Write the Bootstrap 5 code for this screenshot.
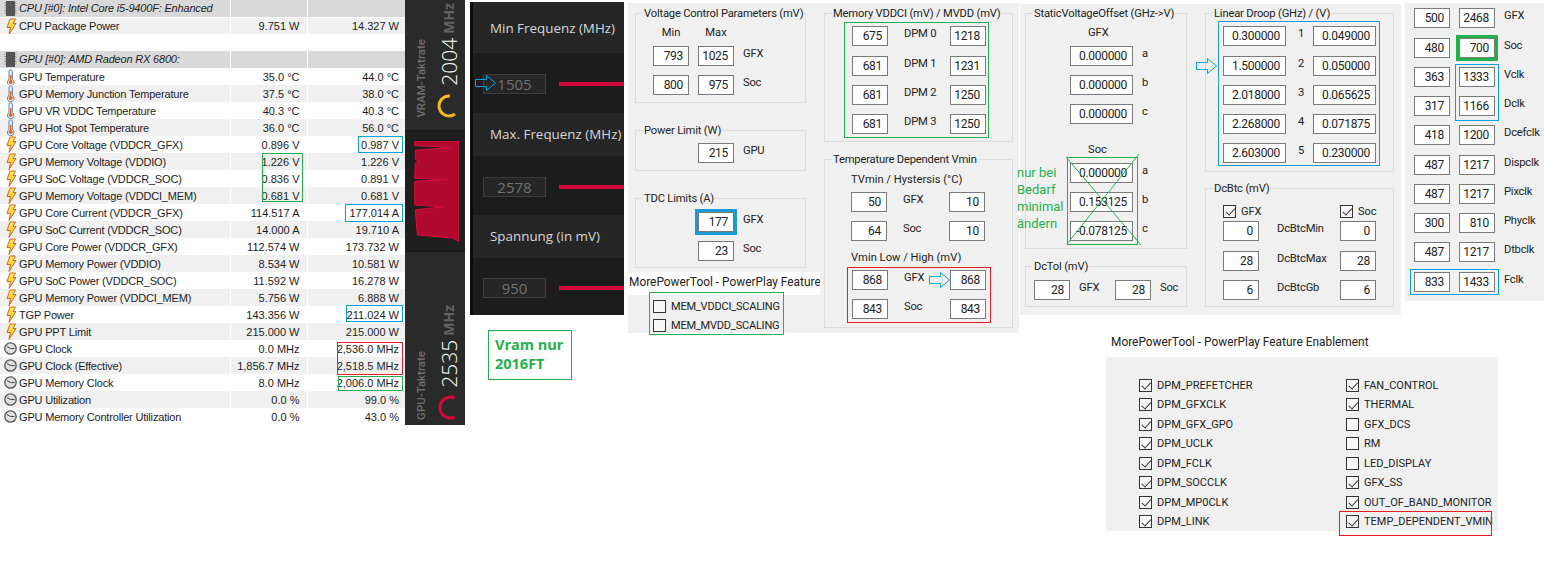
<!DOCTYPE html>
<html lang="de">
<head>
<meta charset="utf-8">
<title>GPU Tuning</title>
<link href="https://cdn.jsdelivr.net/npm/bootstrap@5.3.0/dist/css/bootstrap.min.css" rel="stylesheet">
<style>
html,body{margin:0;background:#fff}
.stage{position:relative;width:1546px;height:561px;overflow:hidden;background:#fff;font-family:Roboto,"Liberation Sans",sans-serif;font-size:11.2px;line-height:15px;color:#222}
.win{position:absolute}
/* sensor table */
.w-table{left:0;top:0;width:405px}
.hw{border-collapse:collapse;table-layout:fixed;width:405px;font-family:"Liberation Sans",sans-serif;font-size:11px;color:#1c1c1c}
.hw td{height:17px;padding:0;line-height:16px;white-space:nowrap;overflow:hidden}
.hw td:first-child{width:230px;padding-left:19px;position:relative;border-right:1px solid #fff;letter-spacing:-.18px}
.hw td:nth-child(2){width:77px;text-align:right;padding-right:7px;border-right:1px solid #fff}
.hw td:nth-child(3){width:98px;text-align:right;padding-right:6px}
.hw tr.alt td{background:#f0f0f0}
.hw tr.sec td{background:#d9d9d9;font-style:italic;border-bottom:1px solid #fff}
.ic{position:absolute;left:4px;top:0;width:13px;height:17px}
.mk{position:absolute;border:1px solid;pointer-events:none}
.c-b{border-color:#00a2e8}.c-g{border-color:#22b14c}.c-r{border-color:#ed1c24}
.m1{left:358px;top:136px;width:45px;height:17px}
.m2{left:262px;top:153px;width:41px;height:49px}
.m3{left:345px;top:204px;width:58px;height:18px}
.m4{left:346px;top:305px;width:57px;height:17px}
.m5{left:337px;top:342px;width:66px;height:33px}
.m6{left:338px;top:376px;width:65px;height:15px}
/* radeon strip */
.w-strip{left:405px;top:0;width:60px;height:425px;background:#2a2a2a;display:flex;flex-direction:column;font-family:"Open Sans","Noto Sans",sans-serif}
.sx{display:flex;gap:6px;padding-left:10px}
.sx1{height:130px;padding-top:5px;padding-bottom:12px;align-items:flex-end}
.sx3{flex:1;padding-bottom:5px;align-items:flex-end}
.sx2{height:122px;background:#1f1f1f;border-top:1px solid #181818;border-bottom:1px solid #181818;padding:10px 0 0 9px}
.rot{writing-mode:vertical-rl;transform:rotate(180deg);white-space:nowrap}
.lbv{font-family:Roboto,sans-serif;font-size:11.5px;font-weight:500;color:#6e6e6e;line-height:13px;width:13px}
.bigc{display:flex;flex-direction:column;align-items:flex-start;gap:7px}
.big{font-size:21px;font-weight:300;color:#fff;line-height:24px;width:24px;margin-left:3px}
.big b{font-size:14px;font-weight:700;color:#626262;margin-inline-start:4px}
/* dark settings */
.w-dark{left:470px;top:2px;width:154px;height:313px;background:#1c1c1c;border-left:3px solid #0c0c0c;display:flex;flex-direction:column;font-family:"Open Sans","Noto Sans",sans-serif}
.dh{background:#262626;color:#d8d8d8;font-size:13.4px;padding-left:17px;display:flex;align-items:center;white-space:nowrap;overflow:hidden;margin-bottom:2px}
.dh1{height:51px;padding-top:2px}.dh2{height:43px}
.dr{display:flex;align-items:center;padding-left:10px;gap:13px}
.dr1{height:58px}.dr2{height:57px}.dr3{flex:1}
.dv{width:63px;height:20px;border:1px solid #3d3d3d;background:#262626;color:#727272;font-size:15px;line-height:18px;text-align:center}
.dbar{flex:1;height:4px;background:#d4063c}
.w-note{left:488px;top:330px;width:84px;height:50px;border:1px solid #22b14c;color:#22b14c;font:700 14.5px/19px "Open Sans","Noto Sans",sans-serif;padding:4px 0 0 6px}
/* dialog panels */
.pnl{background:#f0f0f0}
.w-a{left:628px;top:3px;width:391px;height:330px;display:flex}
.w-b{left:1020px;top:4px;width:381px;height:311px;display:flex}
.w-c{left:1405px;top:3px;width:139px;height:298px;padding:5px 0 0 9px}
.gb{border:1px solid #dcdcdc}
.gt{display:table;margin:-8px 0 0 7px;padding:0 1px;background:#f0f0f0;height:15px;white-space:nowrap;letter-spacing:-.18px}
.tb{display:block;height:20px;background:#fff;border:1px solid #7a7a7a;text-align:right;padding-right:5px;line-height:19px;color:#222;font-size:12px;letter-spacing:-.3px}
.lb{align-self:start;white-space:nowrap;letter-spacing:-.2px}
.thick-b{outline:3px solid #1b9ad6;outline-offset:0}
.thick-g{outline:3px solid #22b14c;outline-offset:0}
.ca{width:192px;flex:none;padding-top:10px}
.cb2{width:199px;flex:none;padding:10px 0 0 4px}
.ca .gb{margin-left:7px;width:171px}
.g1{height:90px}.g2{height:41px;margin-top:27px}.g3{height:70px;margin-top:27px}
.gr3{display:grid;grid-template-columns:36px 36px auto;column-gap:9px;padding-left:17px}
.gr3.r1{margin-top:4px;row-gap:9px}
.gr3.r1 .hh{margin-bottom:-3px;text-align:center}
.gr3.r2{margin-top:5px}
.gr3.r3{margin-top:6px;row-gap:9px}
.strip-w{margin-top:4px;height:23px;background:#fff;padding:3px 0 0 1px;font-size:11.9px;white-space:nowrap;overflow:hidden;color:#222}
.chkbox{position:relative;z-index:1;margin:-3px 0 0 21px;width:135px;height:43px;border:1px solid #22b14c;padding:4px 0 0 3px}
.ck{display:flex;align-items:center;gap:5px;height:19px;white-space:nowrap;font-size:11px}
.chkbox .ck{letter-spacing:-.2px}
.cbx{appearance:none;-webkit-appearance:none;flex:none;position:relative;width:13px;height:13px;margin:0;border:1px solid #333;background:#f7f7f7;border-radius:0}
.cbx:checked::after{content:"";position:absolute;left:3.5px;top:.5px;width:4.5px;height:8.5px;border-right:1px solid #333;border-bottom:1px solid #333;transform:rotate(42deg)}
.gm{height:129px;width:189px}
.gtemp{height:169px;width:189px;margin-top:17px}
.box-g{margin:0 0 0 19px;width:145px;height:116px;border:1px solid #22b14c;padding:3px 0 0 7px;margin-top:1px}
.gd{display:grid;grid-template-columns:36px 62px 36px}
.r4{grid-template-rows:30px 29px 29px 20px}
.gd .lb{padding-left:16px}
.sub{margin:5px 0 0 26px;height:15px;white-space:nowrap}
.gd.t1{margin:5px 0 0 26px;grid-template-rows:29px 20px}
.sub.s2{margin-top:9px}
.box-r{margin:2px 0 0 22px;width:144px;height:56px;border:1px solid #ed1c24;padding:2px 0 0 4px}
.box-r .gd{grid-template-rows:29px 20px}
.fc{flex:none}
.f1{width:167px;padding:9px 0 0 5px}
.f2{width:214px;padding:9px 0 0 18px}
.gs{width:162px;height:236px}
.gdct{width:162px;height:41px;margin-top:17px}
.gl{width:189px;height:159px}
.gdb{width:189px;height:119px;margin-top:16px}
.gr-s{display:grid;grid-template-columns:63px auto;column-gap:9px;padding-left:44px;row-gap:9px}
.gr-s .hh{padding-left:18px;margin-bottom:-3px}
.gs .t-g{margin-top:4px}
.gs .t-s{margin-top:18px}
.gr-t{display:grid;grid-template-columns:36px 27px 36px auto;column-gap:9px;margin:6px 0 0 8px}
.box-b{margin-left:12px;width:162px;height:145px;border:1px solid #1b9ad6;padding:4px 0 0 4px}
.gr-l{display:grid;grid-template-columns:63px 27px 63px;grid-template-rows:30px 29px 29px 29px 20px}
.gr-l .lb{padding-left:12px}
.gr-d{display:grid;grid-template-columns:36px 81px 36px;grid-template-rows:25px 30px 29px 20px;padding-left:17px}
.gr-d .ck{height:14px;align-self:start;margin-top:8px}
.gr-d .lb{padding-left:18px}
.gr-c{display:grid;grid-template-columns:36px 36px auto;column-gap:9px;grid-template-rows:30px 29px 29px 29px 30px 29px 29px 29px 30px 20px}
.mb1{left:50px;top:61px;width:44px;height:57px}
.mb2{left:5px;top:266px;width:89px;height:26px}
.w-a .ar,.w-b .ar,.w-dark .ar{position:absolute}
.ar{stroke:#00a2e8;fill:none;overflow:visible;width:21px;height:16px}
.a1{left:2px;top:73px}
.a2{left:301px;top:269px}
.a3{left:176px;top:54px}
.xm{position:absolute;left:47px;top:153px;width:71px;height:88px;overflow:visible}
.grn{position:absolute;left:-3px;top:160px;color:#22b14c;font-size:13px;line-height:17px;white-space:nowrap}
.w-f{left:1106px;top:333px;width:392px}
.ft{height:24px;padding:1px 0 0 5px;font-size:11.9px;line-height:16px;white-space:nowrap;color:#222}
.fp{height:174px;padding:18.5px 0 0 33px;display:grid;grid-template-columns:207px auto;grid-auto-rows:19.5px}
.fp .ck{height:19.5px}
.fr{left:233px;top:178px;width:153px;height:25px}
</style>
</head>
<body>
<svg width="0" height="0" class="d-block" aria-hidden="true">
<defs>
<linearGradient id="bolt" x1="0" y1="0" x2="0" y2="1"><stop offset="0" stop-color="#ffe96b"/><stop offset="1" stop-color="#f6c21a"/></linearGradient>
<symbol id="i-bolt" viewBox="0 0 13 17"><path d="M6 1 L11.5 1 L9 5.5 L12 5.5 L5 16.5 L6.5 9.5 L3 9.5 Z" fill="url(#bolt)" stroke="#d9661c" stroke-width="1"/></symbol>
<symbol id="i-th" viewBox="0 0 13 17"><path d="M5 2.5 a1.7 1.7 0 0 1 3.4 0 V10.5 a3.3 3.3 0 1 1 -3.4 0 Z" fill="#e8eef6" stroke="#5b7fae" stroke-width="1"/><path d="M6.7 6 V12" stroke="#e2661a" stroke-width="1.4"/><circle cx="6.7" cy="13" r="2" fill="#e2661a"/></symbol>
<symbol id="i-cl" viewBox="0 0 13 17"><circle cx="6.5" cy="8.5" r="5.7" fill="#dfdfdf" stroke="#555" stroke-width="1.3"/><path d="M6.5 8.5 L3 6.5 M6.5 8.5 H10.5" stroke="#444" stroke-width="1"/></symbol>
<symbol id="i-ch" viewBox="0 0 13 17"><rect x="2" y="1" width="9" height="15" fill="#555"/><path d="M0.5 3H2M0.5 5.5H2M0.5 8H2M0.5 10.5H2M0.5 13H2M11 3H12.5M11 5.5H12.5M11 8H12.5M11 10.5H12.5M11 13H12.5" stroke="#888"/></symbol>
</defs>
</svg>
<div class="stage">

<div class="win w-table">
<table class="hw"><tbody>
<tr class="sec"><td><svg class="ic"><use href="#i-ch"/></svg>CPU [#0]: Intel Core i5-9400F: Enhanced</td><td></td><td></td></tr>
<tr class="alt"><td><svg class="ic"><use href="#i-bolt"/></svg>CPU Package Power</td><td>9.751 W</td><td>14.327 W</td></tr>
<tr><td></td><td></td><td></td></tr>
<tr class="sec"><td><svg class="ic"><use href="#i-ch"/></svg>GPU [#0]: AMD Radeon RX 6800:</td><td></td><td></td></tr>
<tr><td><svg class="ic"><use href="#i-th"/></svg>GPU Temperature</td><td>35.0 °C</td><td>44.0 °C</td></tr>
<tr class="alt"><td><svg class="ic"><use href="#i-th"/></svg>GPU Memory Junction Temperature</td><td>37.5 °C</td><td>38.0 °C</td></tr>
<tr><td><svg class="ic"><use href="#i-th"/></svg>GPU VR VDDC Temperature</td><td>40.3 °C</td><td>40.3 °C</td></tr>
<tr class="alt"><td><svg class="ic"><use href="#i-th"/></svg>GPU Hot Spot Temperature</td><td>36.0 °C</td><td>56.0 °C</td></tr>
<tr><td><svg class="ic"><use href="#i-bolt"/></svg>GPU Core Voltage (VDDCR_GFX)</td><td>0.896 V</td><td>0.987 V</td></tr>
<tr class="alt"><td><svg class="ic"><use href="#i-bolt"/></svg>GPU Memory Voltage (VDDIO)</td><td>1.226 V</td><td>1.226 V</td></tr>
<tr><td><svg class="ic"><use href="#i-bolt"/></svg>GPU SoC Voltage (VDDCR_SOC)</td><td>0.836 V</td><td>0.891 V</td></tr>
<tr class="alt"><td><svg class="ic"><use href="#i-bolt"/></svg>GPU Memory Voltage (VDDCI_MEM)</td><td>0.681 V</td><td>0.681 V</td></tr>
<tr><td><svg class="ic"><use href="#i-bolt"/></svg>GPU Core Current (VDDCR_GFX)</td><td>114.517 A</td><td>177.014 A</td></tr>
<tr class="alt"><td><svg class="ic"><use href="#i-bolt"/></svg>GPU SoC Current (VDDCR_SOC)</td><td>14.000 A</td><td>19.710 A</td></tr>
<tr><td><svg class="ic"><use href="#i-bolt"/></svg>GPU Core Power (VDDCR_GFX)</td><td>112.574 W</td><td>173.732 W</td></tr>
<tr class="alt"><td><svg class="ic"><use href="#i-bolt"/></svg>GPU Memory Power (VDDIO)</td><td>8.534 W</td><td>10.581 W</td></tr>
<tr><td><svg class="ic"><use href="#i-bolt"/></svg>GPU SoC Power (VDDCR_SOC)</td><td>11.592 W</td><td>16.278 W</td></tr>
<tr class="alt"><td><svg class="ic"><use href="#i-bolt"/></svg>GPU Memory Power (VDDCI_MEM)</td><td>5.756 W</td><td>6.888 W</td></tr>
<tr><td><svg class="ic"><use href="#i-bolt"/></svg>TGP Power</td><td>143.356 W</td><td>211.024 W</td></tr>
<tr class="alt"><td><svg class="ic"><use href="#i-bolt"/></svg>GPU PPT Limit</td><td>215.000 W</td><td>215.000 W</td></tr>
<tr><td><svg class="ic"><use href="#i-cl"/></svg>GPU Clock</td><td>0.0 MHz</td><td>2,536.0 MHz</td></tr>
<tr class="alt"><td><svg class="ic"><use href="#i-cl"/></svg>GPU Clock (Effective)</td><td>1,856.7 MHz</td><td>2,518.5 MHz</td></tr>
<tr><td><svg class="ic"><use href="#i-cl"/></svg>GPU Memory Clock</td><td>8.0 MHz</td><td>2,006.0 MHz</td></tr>
<tr class="alt"><td><svg class="ic"><use href="#i-cl"/></svg>GPU Utilization</td><td>0.0 %</td><td>99.0 %</td></tr>
<tr><td><svg class="ic"><use href="#i-cl"/></svg>GPU Memory Controller Utilization</td><td>0.0 %</td><td>43.0 %</td></tr>
</tbody></table>
<div class="mk c-b m1"></div><div class="mk c-g m2"></div><div class="mk c-b m3"></div>
<div class="mk c-b m4"></div><div class="mk c-r m5"></div><div class="mk c-g m6"></div>
</div>

<div class="win w-strip">
<div class="sx sx1">
<div class="rot lbv">VRAM-Taktrate</div>
<div class="bigc">
<div class="rot big">2004<b>MHz</b></div>
<svg width="23" height="25" viewBox="0 0 23 25"><path d="M16 3 A10 10 0 1 0 21 21" fill="none" stroke="#f5b81f" stroke-width="3"/></svg>
</div>
</div>
<div class="sx2">
<svg width="45" height="101" viewBox="20 35 135 301"><path d="M22 36 H155 V335 L135 325 L30 316 L24 240 L108 232 L22 226 L22 155 L120 150 L22 146 L24 100 L36 95 L24 90 L24 62 L130 53 L22 48 Z" fill="#b00a2e" stroke="#e0093f" stroke-width="3"/></svg>
</div>
<div class="sx sx3">
<div class="rot lbv">GPU-Taktrate</div>
<div class="bigc">
<div class="rot big">2535<b>MHz</b></div>
<svg width="23" height="25" viewBox="0 0 23 25"><path d="M21 3 A10.5 10.5 0 1 0 21 22" fill="none" stroke="#d4063c" stroke-width="3"/></svg>
</div>
</div>
</div>

<div class="win w-dark">
<div class="dh dh1">Min Frequenz (MHz)</div>
<div class="dr dr1"><div class="dv">1505</div><div class="dbar"></div></div>
<div class="dh dh2">Max. Frequenz (MHz)</div>
<div class="dr dr2"><div class="dv">2578</div><div class="dbar"></div></div>
<div class="dh dh2">Spannung (in mV)</div>
<div class="dr dr3"><div class="dv">950</div><div class="dbar"></div></div>
<svg class="ar a1" viewBox="0 0 21 16"><path d="M.5 4.5H11.5V.5L20.5 8 11.5 15.5V11.5H.5Z"/></svg>
</div>

<div class="win w-note">Vram nur<br>2016FT</div>

<div class="win w-a pnl">
<div class="ca">
<div class="gb g1"><span class="gt">Voltage Control Parameters (mV)</span>
<div class="gr3 r1">
<div class="hh">Min</div><div class="hh">Max</div><div></div>
<span class="tb">793</span><span class="tb">1025</span><span class="lb">GFX</span>
<span class="tb">800</span><span class="tb">975</span><span class="lb">Soc</span>
</div></div>
<div class="gb g2"><span class="gt">Power Limit (W)</span>
<div class="gr3 r2"><div></div><span class="tb">215</span><span class="lb">GPU</span></div></div>
<div class="gb g3"><span class="gt">TDC Limits (A)</span>
<div class="gr3 r3"><div></div><span class="tb thick-b">177</span><span class="lb">GFX</span><div></div><span class="tb">23</span><span class="lb">Soc</span></div></div>
<div class="strip-w">MorePowerTool - PowerPlay Feature</div>
<div class="chkbox">
<label class="ck"><input type="checkbox" class="cbx">MEM_VDDCI_SCALING</label>
<label class="ck"><input type="checkbox" class="cbx">MEM_MVDD_SCALING</label>
</div>
</div>
<div class="cb2">
<div class="gb gm"><span class="gt">Memory VDDCI (mV) / MVDD (mV)</span>
<div class="box-g"><div class="gd r4">
<span class="tb">675</span><span class="lb">DPM 0</span><span class="tb">1218</span>
<span class="tb">681</span><span class="lb">DPM 1</span><span class="tb">1231</span>
<span class="tb">681</span><span class="lb">DPM 2</span><span class="tb">1250</span>
<span class="tb">681</span><span class="lb">DPM 3</span><span class="tb">1250</span>
</div></div></div>
<div class="gb gtemp"><span class="gt">Temperature Dependent Vmin</span>
<div class="sub">TVmin / Hystersis (°C)</div>
<div class="gd t1">
<span class="tb">50</span><span class="lb">GFX</span><span class="tb">10</span>
<span class="tb">64</span><span class="lb">Soc</span><span class="tb">10</span>
</div>
<div class="sub s2">Vmin Low / High (mV)</div>
<div class="box-r"><div class="gd">
<span class="tb">868</span><span class="lb">GFX</span><span class="tb">868</span>
<span class="tb">843</span><span class="lb">Soc</span><span class="tb">843</span>
</div></div>
</div>
</div>
<svg class="ar a2" viewBox="0 0 21 16"><path d="M.5 4.5H11.5V.5L20.5 8 11.5 15.5V11.5H.5Z"/></svg>
</div>

<div class="win w-b pnl">
<div class="fc f1">
<div class="gb gs"><span class="gt">StaticVoltageOffset (GHz-&gt;V)</span>
<div class="gr-s t-g">
<div class="hh">GFX</div><div></div>
<span class="tb">0.000000</span><span class="lb">a</span>
<span class="tb">0.000000</span><span class="lb">b</span>
<span class="tb">0.000000</span><span class="lb">c</span>
</div>
<div class="gr-s t-s">
<div class="hh">Soc</div><div></div>
<span class="tb">0.000000</span><span class="lb">a</span>
<span class="tb">0.153125</span><span class="lb">b</span>
<span class="tb">-0.078125</span><span class="lb">c</span>
</div>
</div>
<div class="gb gdct"><span class="gt">DcTol (mV)</span>
<div class="gr-t"><span class="tb">28</span><span class="lb">GFX</span><span class="tb">28</span><span class="lb">Soc</span></div></div>
</div>
<div class="fc f2">
<div class="gb gl"><span class="gt">Linear Droop (GHz) / (V)</span>
<div class="box-b"><div class="gr-l">
<span class="tb">0.300000</span><span class="lb">1</span><span class="tb">0.049000</span>
<span class="tb">1.500000</span><span class="lb">2</span><span class="tb">0.050000</span>
<span class="tb">2.018000</span><span class="lb">3</span><span class="tb">0.065625</span>
<span class="tb">2.268000</span><span class="lb">4</span><span class="tb">0.071875</span>
<span class="tb">2.603000</span><span class="lb">5</span><span class="tb">0.230000</span>
</div></div></div>
<div class="gb gdb"><span class="gt">DcBtc (mV)</span>
<div class="gr-d">
<label class="ck"><input type="checkbox" class="cbx" checked>GFX</label><div></div><label class="ck"><input type="checkbox" class="cbx" checked>Soc</label>
<span class="tb">0</span><span class="lb">DcBtcMin</span><span class="tb">0</span>
<span class="tb">28</span><span class="lb">DcBtcMax</span><span class="tb">28</span>
<span class="tb">6</span><span class="lb">DcBtcGb</span><span class="tb">6</span>
</div></div>
</div>
<svg class="ar a3" viewBox="0 0 21 16"><path d="M.5 4.5H11.5V.5L20.5 8 11.5 15.5V11.5H.5Z"/></svg>
<svg class="xm" viewBox="0 0 71 88"><g fill="none" stroke="#22b14c"><rect x=".5" y=".5" width="70" height="87"/><path d="M-1 0 L74 88 M72 -3 L0 87"/></g></svg>
<div class="grn">nur bei<br>Bedarf<br>minimal<br>ändern</div>
</div>

<div class="win w-c pnl">
<div class="gr-c">
<span class="tb">500</span><span class="tb">2468</span><span class="lb">GFX</span>
<span class="tb">480</span><span class="tb thick-g">700</span><span class="lb">Soc</span>
<span class="tb">363</span><span class="tb">1333</span><span class="lb">Vclk</span>
<span class="tb">317</span><span class="tb">1166</span><span class="lb">Dclk</span>
<span class="tb">418</span><span class="tb">1200</span><span class="lb">Dcefclk</span>
<span class="tb">487</span><span class="tb">1217</span><span class="lb">Dispclk</span>
<span class="tb">487</span><span class="tb">1217</span><span class="lb">Pixclk</span>
<span class="tb">300</span><span class="tb">810</span><span class="lb">Phyclk</span>
<span class="tb">487</span><span class="tb">1217</span><span class="lb">Dtbclk</span>
<span class="tb">833</span><span class="tb">1433</span><span class="lb">Fclk</span>
</div>
<div class="mk c-b mb1"></div><div class="mk c-b mb2"></div>
</div>

<div class="win w-f">
<div class="ft">MorePowerTool - PowerPlay Feature Enablement</div>
<div class="fp pnl">
<label class="ck"><input type="checkbox" class="cbx" checked>DPM_PREFETCHER</label><label class="ck"><input type="checkbox" class="cbx" checked>FAN_CONTROL</label>
<label class="ck"><input type="checkbox" class="cbx" checked>DPM_GFXCLK</label><label class="ck"><input type="checkbox" class="cbx" checked>THERMAL</label>
<label class="ck"><input type="checkbox" class="cbx" checked>DPM_GFX_GPO</label><label class="ck"><input type="checkbox" class="cbx">GFX_DCS</label>
<label class="ck"><input type="checkbox" class="cbx" checked>DPM_UCLK</label><label class="ck"><input type="checkbox" class="cbx">RM</label>
<label class="ck"><input type="checkbox" class="cbx" checked>DPM_FCLK</label><label class="ck"><input type="checkbox" class="cbx">LED_DISPLAY</label>
<label class="ck"><input type="checkbox" class="cbx" checked>DPM_SOCCLK</label><label class="ck"><input type="checkbox" class="cbx" checked>GFX_SS</label>
<label class="ck"><input type="checkbox" class="cbx" checked>DPM_MP0CLK</label><label class="ck"><input type="checkbox" class="cbx" checked>OUT_OF_BAND_MONITOR</label>
<label class="ck"><input type="checkbox" class="cbx" checked>DPM_LINK</label><label class="ck"><input type="checkbox" class="cbx" checked>TEMP_DEPENDENT_VMIN</label>
</div>
<div class="mk c-r fr"></div>
</div>

</div>
<script src="https://cdn.jsdelivr.net/npm/bootstrap@5.3.0/dist/js/bootstrap.bundle.min.js"></script>
</body>
</html>
